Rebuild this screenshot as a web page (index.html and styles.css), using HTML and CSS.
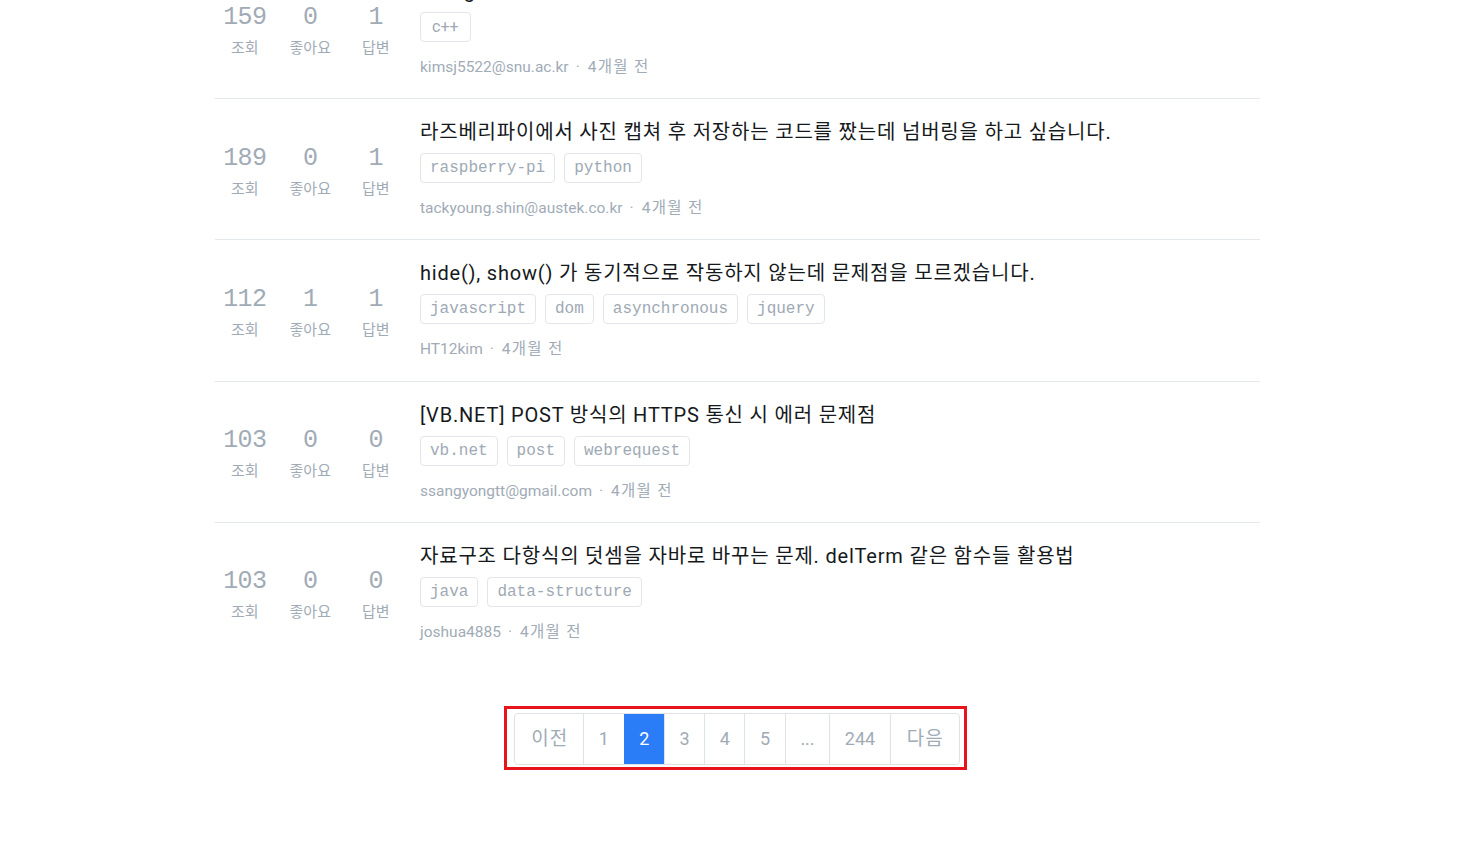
FILE: index.html
```html
<!DOCTYPE html>
<html lang="ko">
<head>
<meta charset="utf-8">
<title>질문 목록</title>
<link rel="stylesheet" href="styles.css">
</head>
<body>
<div class="list">
  <div class="row">
    <div class="stats">
      <div class="stat"><div class="num">159</div><div class="label">조회</div></div>
      <div class="stat"><div class="num">0</div><div class="label">좋아요</div></div>
      <div class="stat"><div class="num">1</div><div class="label">답변</div></div>
    </div>
    <div class="content">
      <div class="title">C++ getline 사용 시 입력이 안 됩니다.</div>
      <div class="tags"><span class="tag tag-sans">c++</span></div>
      <div class="meta">kimsj5522@snu.ac.kr<span class="dot">·</span><span class="time">4개월 전</span></div>
    </div>
  </div>
  <div class="row">
    <div class="stats">
      <div class="stat"><div class="num">189</div><div class="label">조회</div></div>
      <div class="stat"><div class="num">0</div><div class="label">좋아요</div></div>
      <div class="stat"><div class="num">1</div><div class="label">답변</div></div>
    </div>
    <div class="content">
      <div class="title">라즈베리파이에서 사진 캡쳐 후 저장하는 코드를 짰는데 넘버링을 하고 싶습니다.</div>
      <div class="tags"><span class="tag">raspberry-pi</span><span class="tag">python</span></div>
      <div class="meta">tackyoung.shin@austek.co.kr<span class="dot">·</span><span class="time">4개월 전</span></div>
    </div>
  </div>
  <div class="row">
    <div class="stats">
      <div class="stat"><div class="num">112</div><div class="label">조회</div></div>
      <div class="stat"><div class="num">1</div><div class="label">좋아요</div></div>
      <div class="stat"><div class="num">1</div><div class="label">답변</div></div>
    </div>
    <div class="content">
      <div class="title">hide(), show() 가 동기적으로 작동하지 않는데 문제점을 모르겠습니다.</div>
      <div class="tags"><span class="tag">javascript</span><span class="tag">dom</span><span class="tag">asynchronous</span><span class="tag">jquery</span></div>
      <div class="meta">HT12kim<span class="dot">·</span><span class="time">4개월 전</span></div>
    </div>
  </div>
  <div class="row">
    <div class="stats">
      <div class="stat"><div class="num">103</div><div class="label">조회</div></div>
      <div class="stat"><div class="num">0</div><div class="label">좋아요</div></div>
      <div class="stat"><div class="num">0</div><div class="label">답변</div></div>
    </div>
    <div class="content">
      <div class="title">[VB.NET] POST 방식의 HTTPS 통신 시 에러 문제점</div>
      <div class="tags"><span class="tag">vb.net</span><span class="tag">post</span><span class="tag">webrequest</span></div>
      <div class="meta">ssangyongtt@gmail.com<span class="dot">·</span><span class="time">4개월 전</span></div>
    </div>
  </div>
  <div class="row">
    <div class="stats">
      <div class="stat"><div class="num">103</div><div class="label">조회</div></div>
      <div class="stat"><div class="num">0</div><div class="label">좋아요</div></div>
      <div class="stat"><div class="num">0</div><div class="label">답변</div></div>
    </div>
    <div class="content">
      <div class="title">자료구조 다항식의 덧셈을 자바로 바꾸는 문제. delTerm 같은 함수들 활용법</div>
      <div class="tags"><span class="tag">java</span><span class="tag">data-structure</span></div>
      <div class="meta">joshua4885<span class="dot">·</span><span class="time">4개월 전</span></div>
    </div>
  </div>
</div>
<div class="pager-wrap">
  <div class="highlight">
    <nav class="pager">
      <a class="page word">이전</a>
      <a class="page">1</a>
      <a class="page active">2</a>
      <a class="page">3</a>
      <a class="page">4</a>
      <a class="page">5</a>
      <a class="page">...</a>
      <a class="page">244</a>
      <a class="page word">다음</a>
    </nav>
  </div>
</div>
</body>
</html>
```
FILE: styles.css
```css
html, body {
  margin: 0;
  padding: 0;
  background: #ffffff;
}
body {
  font-family: Roboto, "Noto Sans CJK KR", sans-serif;
  color: #1d2125;
}
.list {
  width: 1045px;
  margin: -42px auto 0;
}
.row {
  display: flex;
  align-items: center;
  padding: 21px 0 21.2px;
  border-bottom: 1px solid #e5e8eb;
}
.row:last-child {
  border-bottom: none;
}
.stats {
  display: flex;
  margin-left: -3px;
  padding-top: 3px;
  flex: none;
}
.stat {
  width: 65.5px;
  text-align: center;
  color: #a1abb6;
}
.num {
  font-family: "Liberation Mono", "DejaVu Sans Mono", monospace;
  font-size: 25px;
  line-height: 30px;
  letter-spacing: -0.6px;
}
.label {
  font-family: "Noto Sans CJK KR", sans-serif;
  font-size: 15px;
  line-height: 20px;
  margin-top: 4px;
}
.content {
  margin-left: 11.5px;
  min-width: 0;
}
.title {
  font-size: 20px;
  line-height: 24px;
  letter-spacing: 0.8px;
  color: #16191c;
  white-space: nowrap;
}
.tags {
  display: flex;
  gap: 9px;
  margin-top: 9px;
}
.tag {
  font-family: "Liberation Mono", "DejaVu Sans Mono", monospace;
  font-size: 16px;
  line-height: 20px;
  padding: 4px 9px;
  border: 1px solid #e2e6ea;
  border-radius: 4px;
  color: #9ea9b4;
}
.tag-sans {
  font-family: Roboto, sans-serif;
  font-size: 16px;
  padding: 4px 11px;
}
.meta {
  margin-top: 15px;
  font-size: 15.5px;
  line-height: 20px;
  color: #a1abb6;
}
.dot {
  margin: 0 8px 0 7px;
}
.time {
  letter-spacing: 1.3px;
}
.pager-wrap {
  display: flex;
  justify-content: center;
  margin-top: 43px;
  padding-bottom: 90px;
}
.highlight {
  border: 3px solid #e8141c;
  padding: 4px 4px 2px 7px;
  margin-right: 4px;
}
.pager {
  display: flex;
  border: 1px solid #dfe3e8;
  border-radius: 4px;
}
.page {
  padding: 0 14.6px;
  height: 50px;
  line-height: 50px;
  font-size: 18px;
  color: #a1abb6;
  border-left: 1px solid #dfe3e8;
}
.page:first-child {
  border-left: none;
}
.page.word {
  font-size: 19px;
  letter-spacing: 1px;
  padding: 0 15px 0 16px;
}
.page.active {
  background: #2b7cf7;
  color: #ffffff;
  border-left-color: #2b7cf7;
}
```
